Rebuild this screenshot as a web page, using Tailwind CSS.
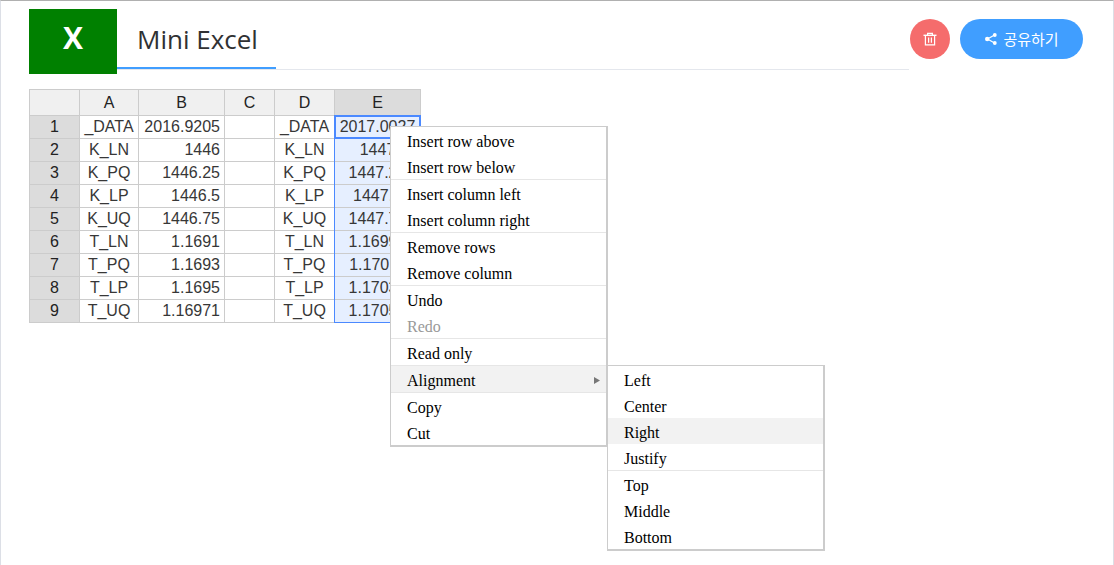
<!DOCTYPE html>
<html lang="ko">
<head>
<meta charset="utf-8">
<title>Mini Excel</title>
<script src="https://cdn.jsdelivr.net/npm/@tailwindcss/browser@4"></script>
</head>
<body class="min-h-screen bg-white flex flex-col">
<div class="flex-1 border-t border-x border-t-[#b0b0b0] border-x-[#dcdfe6] pl-7 pr-[30px] pt-2">
  <header class="flex items-start">
    <div class="w-[88px] h-[65px] bg-[#008000] text-white text-center font-bold text-[30px] leading-[57px] font-['Open_Sans',sans-serif]">X</div>
    <nav class="flex-1 h-[61px] border-b border-[#e4e7ed] flex">
      <a href="#" class="h-[60px] w-[159px] pl-5 border-b-2 border-[#409eff] text-[#303133] text-[26px] leading-[60px] whitespace-nowrap font-['Open_Sans',sans-serif]">Mini Excel</a>
    </nav>
    <div class="flex gap-[10px] pt-[10px] pl-px">
      <button type="button" aria-label="삭제" class="size-10 rounded-full bg-[#f56c6c] text-white flex items-center justify-center">
        <svg class="size-[14px]" viewBox="0 0 14 14" fill="none" stroke="currentColor"><path stroke-width="1.4" d="M.5 3.3h13"/><path stroke-width="1.2" d="M4.6 3V1.4h4.8V3M2.4 3.5v9.4h9.2V3.5M5.6 5.5v5.2M8.4 5.5v5.2"/></svg>
      </button>
      <button type="button" class="h-10 w-[123px] rounded-full bg-[#409eff] text-white flex items-center justify-center gap-[5px] text-[15px] leading-5 font-['Noto_Sans_CJK_KR',sans-serif]">
        <svg class="size-[14px]" viewBox="0 0 14 14" fill="currentColor"><path d="M10.5 3L3.5 7l7 4" fill="none" stroke="currentColor" stroke-width="1.2"/><circle cx="10.8" cy="3" r="1.9"/><circle cx="3.2" cy="7" r="2.2"/><circle cx="10.8" cy="11" r="1.9"/></svg>
        <span>공유하기</span>
      </button>
    </div>
  </header>

  <main class="relative w-fit mt-[15px]">
    <table class="table-fixed w-[392px] border-collapse text-base leading-[22px] text-[#373737] font-['Liberation_Sans',sans-serif] text-center [&_td]:border [&_th]:border [&_td]:border-[#ccc] [&_th]:border-[#ccc] [&_th]:font-normal [&_th]:p-0 [&_th]:text-[#222] [&_td]:py-0 [&_td]:px-1 [&_tbody_th]:bg-[#dcdcdc] [&_td:nth-child(3)]:text-right [&_td:nth-child(6)]:bg-[#e6efff]">
      <colgroup><col class="w-[50px]"><col class="w-[59px]"><col class="w-[86px]"><col class="w-[50px]"><col class="w-[60px]"><col class="w-[86px]"></colgroup>
      <thead class="bg-[#f0f0f0] leading-[25px]"><tr><th></th><th>A</th><th>B</th><th>C</th><th>D</th><th class="bg-[#dcdcdc]">E</th></tr></thead>
      <tbody>
        <tr><th>1</th><td>_DATA</td><td>2016.9205</td><td></td><td>_DATA</td><td>2017.0027</td></tr>
        <tr><th>2</th><td>K_LN</td><td>1446</td><td></td><td>K_LN</td><td>1447</td></tr>
        <tr><th>3</th><td>K_PQ</td><td>1446.25</td><td></td><td>K_PQ</td><td>1447.25</td></tr>
        <tr><th>4</th><td>K_LP</td><td>1446.5</td><td></td><td>K_LP</td><td>1447.5</td></tr>
        <tr><th>5</th><td>K_UQ</td><td>1446.75</td><td></td><td>K_UQ</td><td>1447.75</td></tr>
        <tr><th>6</th><td>T_LN</td><td>1.1691</td><td></td><td>T_LN</td><td>1.16991</td></tr>
        <tr><th>7</th><td>T_PQ</td><td>1.1693</td><td></td><td>T_PQ</td><td>1.17011</td></tr>
        <tr><th>8</th><td>T_LP</td><td>1.1695</td><td></td><td>T_LP</td><td>1.17031</td></tr>
        <tr><th>9</th><td>T_UQ</td><td>1.16971</td><td></td><td>T_UQ</td><td>1.17051</td></tr>
      </tbody>
    </table>
    <!-- selection outline and active cell -->
    <div class="absolute right-0 bottom-0 w-[87px] h-[208px] border border-[#4b89ff]"></div>
    <div class="absolute right-0 top-[26px] w-[87px] h-6 border-2 border-[#4b89ff]"></div>

    <!-- context menu -->
    <div class="absolute left-[361px] top-[37px] w-[218px] bg-white border border-r-2 border-b-2 border-[#ccc] text-base text-black font-['Liberation_Serif',serif] divide-y divide-[#e6e6e6] [&_button]:block [&_button]:w-full [&_button]:h-[26px] [&_button]:px-4 [&_button]:pt-1 [&_button]:text-left [&_button]:leading-[22px]">
      <div><button type="button">Insert row above</button><button type="button">Insert row below</button></div>
      <div><button type="button">Insert column left</button><button type="button">Insert column right</button></div>
      <div><button type="button">Remove rows</button><button type="button">Remove column</button></div>
      <div><button type="button">Undo</button><button type="button" disabled class="text-[#999]">Redo</button></div>
      <div><button type="button">Read only</button></div>
      <div class="relative">
        <button type="button" aria-haspopup="true" class="bg-[#f2f2f2]">Alignment</button>
        <svg class="absolute right-[6px] top-[11px] w-[6px] h-[7px]" viewBox="0 0 6 7" fill="#777"><path d="M0 0L6 3.5L0 7z"/></svg>
        <div class="absolute left-[216px] -top-px w-[218px] bg-white border border-r-2 border-b-2 border-[#ccc] divide-y divide-[#e6e6e6]">
          <div><button type="button">Left</button><button type="button">Center</button><button type="button" class="bg-[#f2f2f2]">Right</button><button type="button">Justify</button></div>
          <div><button type="button">Top</button><button type="button">Middle</button><button type="button">Bottom</button></div>
        </div>
      </div>
      <div><button type="button">Copy</button><button type="button">Cut</button></div>
    </div>
  </main>
</div>
</body>
</html>
